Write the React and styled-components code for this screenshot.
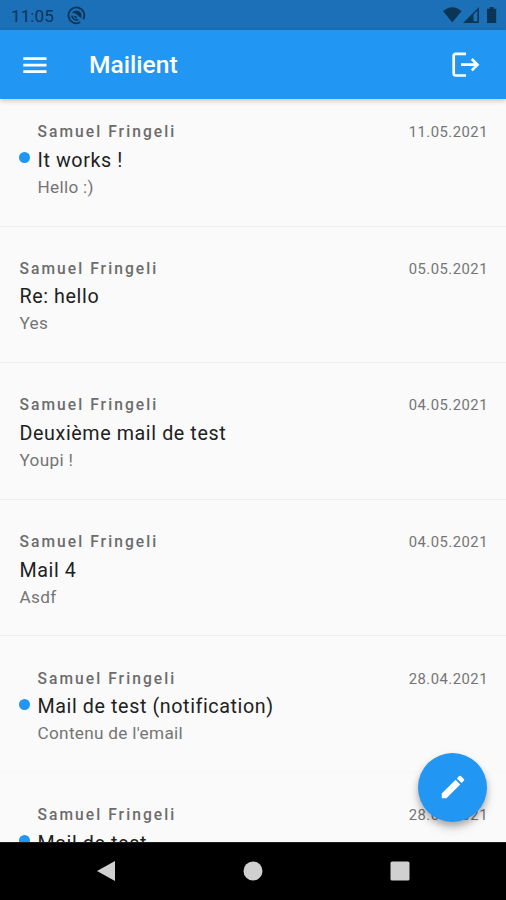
import React from 'react';
import styled, { createGlobalStyle } from 'styled-components';

const GlobalStyle = createGlobalStyle`
  body {
    margin: 0;
    background: #fafafa;
    font-family: Roboto, 'Liberation Sans', sans-serif;
  }
`;

// Styled components
const Screen = styled.div`
  display: flex;
  flex-direction: column;
  width: 506px;
  height: 900px;
  overflow: hidden;
  background: #fafafa;
`;

const StatusBar = styled.div`
  display: flex;
  align-items: center;
  justify-content: space-between;
  flex: none;
  height: 30px;
  box-sizing: border-box;
  padding: 0 8px 0 11px;
  background: #1b70b7;
  color: #0b3557;
`;
const StatusGroup = styled.div`
  display: flex;
  align-items: center;
`;
const Clock = styled.span`
  width: 56px;
  font-size: 17.2px;
  line-height: 30px;
  padding-top: 2px;
`;

const AppBar = styled.header`
  display: flex;
  align-items: center;
  flex: none;
  z-index: 1;
  height: 68.7px;
  box-sizing: border-box;
  padding: 1px 25px 0 20px;
  background: #2196f3;
  color: #fff;
  box-shadow: 0 2px 5px rgba(0, 0, 0, 0.2);
`;
const Title = styled.h1`
  flex: 1;
  margin: 1px 0 0 39px;
  font-size: 24.6px;
  font-weight: 500;
  line-height: 30px;
`;
const IconButton = styled.button`
  display: flex;
  padding: 0;
  border: none;
  background: none;
  color: inherit;
`;

const Content = styled.main`
  position: relative;
  flex: 1;
  min-height: 0;
`;
const MailList = styled.ul`
  height: 100%;
  margin: 0;
  padding: 0;
  overflow: hidden;
  list-style: none;
`;
const MailItem = styled.li`
  display: flex;
  height: 117px;
  box-sizing: border-box;
  padding: 23.3px 18px 0 19.5px;
`;
const Divider = styled.li`
  display: flex;
  align-items: center;
  height: 19.65px;

  &::after {
    content: '';
    flex: 1;
    height: 1px;
    margin-top: 1px;
    background: ${({ $faint }) => ($faint ? '#f7f7f7' : '#eeeeee')};
  }
`;
const UnreadDot = styled.span`
  flex: none;
  width: 11px;
  height: 11px;
  margin: 30px 8px 0 -1px;
  border-radius: 50%;
  background: #2196f3;
`;
const MailText = styled.div`
  flex: 1;
`;
const Sender = styled.div`
  font-size: 15.6px;
  font-weight: 500;
  line-height: 20px;
  letter-spacing: 2.05px;
  color: #6c6c6c;
`;
const Subject = styled.div`
  margin-top: 4.7px;
  font-size: 19.7px;
  line-height: 28px;
  letter-spacing: 0.6px;
  color: #212121;
`;
const Preview = styled.div`
  margin-top: 2px;
  font-size: 17.2px;
  line-height: 20px;
  letter-spacing: 0.3px;
  color: #757575;
`;
const MailDate = styled.time`
  font-size: 14.8px;
  line-height: 20px;
  letter-spacing: 0.5px;
  color: #757575;
`;

const ComposeButton = styled.button`
  position: absolute;
  right: 19px;
  bottom: 20px;
  display: flex;
  align-items: center;
  justify-content: center;
  width: 69px;
  height: 69px;
  padding: 0;
  border: none;
  border-radius: 50%;
  background: #2196f3;
  color: #fff;
  box-shadow: 0 4px 6px rgba(0, 0, 0, 0.24), 0 6px 12px rgba(0, 0, 0, 0.12);
`;

const NavBar = styled.nav`
  display: flex;
  align-items: center;
  justify-content: space-between;
  flex: none;
  z-index: 1;
  height: 58.3px;
  box-sizing: border-box;
  padding: 0 96px;
  border-top: 1px solid #1c1c1c;
  background: #000;
  color: #d0d0d0;
`;

const mails = [
  { sender: 'Samuel Fringeli', subject: 'It works !', preview: 'Hello :)', date: '11.05.2021', unread: true },
  { sender: 'Samuel Fringeli', subject: 'Re: hello', preview: 'Yes', date: '05.05.2021' },
  { sender: 'Samuel Fringeli', subject: 'Deuxième mail de test', preview: 'Youpi !', date: '04.05.2021' },
  { sender: 'Samuel Fringeli', subject: 'Mail 4', preview: 'Asdf', date: '04.05.2021' },
  { sender: 'Samuel Fringeli', subject: 'Mail de test (notification)', preview: "Contenu de l'email", date: '28.04.2021', unread: true },
  { sender: 'Samuel Fringeli', subject: 'Mail de test', preview: '', date: '28.04.2021', unread: true },
];

const SyncIcon = () => (
  <svg width="19" height="19" viewBox="0 0 19 19" fill="none" stroke="currentColor">
    <path d="M13.2 16.3A7.9 7.9 0 1 1 16.2 13.4" strokeWidth="1.8" />
    <path d="M4.8 7.2A5.2 5.2 0 0 1 14.4 8.3V12.4L10.4 9Q8 6.6 4.8 7.2Z" fill="currentColor" stroke="none" />
    <path d="M4.9 9.6A4.7 4.7 0 0 0 11.6 13.6" strokeWidth="1.6" />
    <path d="M7.2 10.2L9.8 12" strokeWidth="1.6" />
  </svg>
);

const StatusIcons = () => (
  <svg width="56" height="18" viewBox="0 0 56 18" fill="currentColor">
    <path d="M1 5Q10.3-2.6 19.6 5L10.3 16.5Z" />
    <path fillRule="evenodd" d="M21 17L37 1V17ZM31.5 8.4V15.3H35.4V4.5Z" />
    <path d="M47.6 1H51.6V2.7H54.2V17H45V2.7H47.6Z" />
  </svg>
);

const MenuIcon = () => (
  <svg width="30" height="30" viewBox="0 0 30 30" fill="currentColor">
    <path d="M3.3 7.2h23.2v2.7H3.3zM3.3 13.7h23.2v2.7H3.3zM3.3 20.2h23.2v2.7H3.3z" />
  </svg>
);

const LogoutIcon = () => (
  <svg width="30" height="30" viewBox="0 0 30 30" fill="none" stroke="currentColor" strokeWidth="2.7">
    <path d="M15 3.9H4.6Q2.7 3.9 2.7 5.8V23.6Q2.7 25.5 4.6 25.5H15" />
    <path d="M10 14.7H26M20.8 9L26.5 14.7L20.8 20.4" />
  </svg>
);

const PencilIcon = () => (
  <svg width="30" height="30" viewBox="0 0 24 24" fill="currentColor">
    <path d="M3 17.25V21h3.75L17.81 9.94l-3.75-3.75L3 17.25zM20.71 7.04a1 1 0 0 0 0-1.41l-2.34-2.34a1 1 0 0 0-1.41 0l-1.83 1.83 3.75 3.75 1.83-1.83z" />
  </svg>
);

export default function App() {
  return (
    <Screen>
      <GlobalStyle />
      <StatusBar>
        <StatusGroup>
          <Clock>11:05</Clock>
          <SyncIcon />
        </StatusGroup>
        <StatusIcons />
      </StatusBar>

      <AppBar>
        <IconButton aria-label="Menu"><MenuIcon /></IconButton>
        <Title>Mailient</Title>
        <IconButton aria-label="Logout"><LogoutIcon /></IconButton>
      </AppBar>

      <Content>
        <MailList>
          {mails.map((mail, i) => (
            <React.Fragment key={i}>
              {i > 0 && <Divider $faint={i === mails.length - 1} />}
              <MailItem>
                {mail.unread && <UnreadDot />}
                <MailText>
                  <Sender>{mail.sender}</Sender>
                  <Subject>{mail.subject}</Subject>
                  <Preview>{mail.preview}</Preview>
                </MailText>
                <MailDate>{mail.date}</MailDate>
              </MailItem>
            </React.Fragment>
          ))}
        </MailList>
        <ComposeButton aria-label="Compose"><PencilIcon /></ComposeButton>
      </Content>

      <NavBar>
        <svg width="19" height="22" viewBox="0 0 19 22" fill="currentColor"><path d="M1 11L19 1V21Z" /></svg>
        <svg width="20" height="20" viewBox="0 0 20 20" fill="currentColor"><circle cx="10" cy="10" r="9.5" /></svg>
        <svg width="20" height="20" viewBox="0 0 20 20" fill="currentColor"><rect x="0.5" y="0.5" width="19" height="19" rx="1.5" /></svg>
      </NavBar>
    </Screen>
  );
}
